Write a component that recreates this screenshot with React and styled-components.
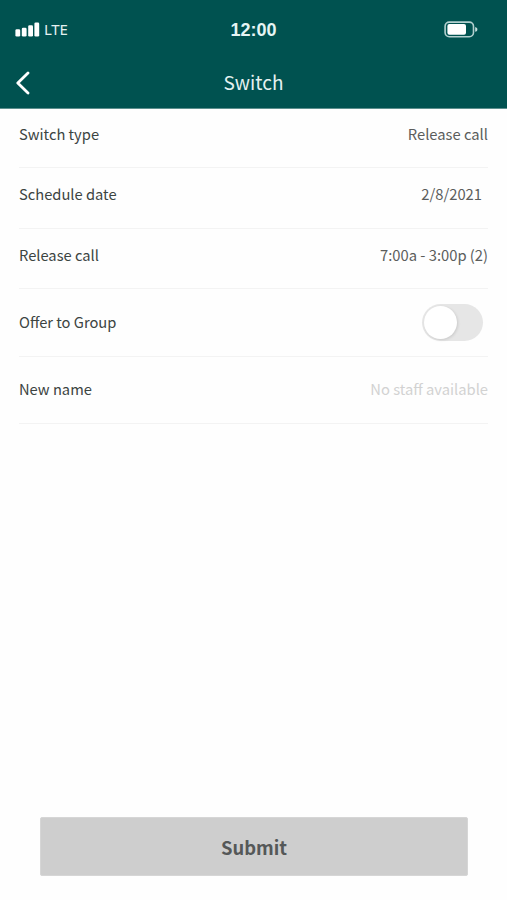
import React from "react";
import styled, { createGlobalStyle } from "styled-components";

const GlobalStyle = createGlobalStyle`
  * { box-sizing: border-box; }
  body { margin: 0; background: #fefefe; }
`;

const Screen = styled.main`
  display: flex;
  flex-direction: column;
  width: 507px;
  height: 900px;
  overflow: hidden;
  background: #fefefe;
  font-family: "Noto Sans CJK SC", "Noto Sans", sans-serif;
`;

const Header = styled.header`
  flex: none;
  height: 109px;
  background: #005250;
  border-bottom: 1px solid #5c8f8e;
  color: #e4f1f0;
`;

const StatusBar = styled.div`
  display: grid;
  grid-template-columns: 1fr auto 1fr;
  align-items: center;
  height: 60px;
  padding: 0 29px 0 15px;
`;

const Carrier = styled.div`
  display: flex;
  align-items: center;
  gap: 4px;
  height: 20px;
  margin-top: -1px;
  font: 400 15px/20px "Noto Sans", sans-serif;
  letter-spacing: -0.2px;
`;

const CarrierName = styled.span`
  padding-bottom: 1px;
`;

const Clock = styled.time`
  margin-left: 14px;
  font: 700 18px/20px "Liberation Sans", Arial, sans-serif;
  color: #e6f5f4;
`;

const Battery = styled.svg`
  justify-self: end;
  margin-top: -1px;
`;

const TitleBar = styled.div`
  display: grid;
  grid-template-columns: 60px 1fr 60px;
  align-items: center;
  height: 45px;
`;

const BackButton = styled.button`
  display: flex;
  width: 46px;
  padding: 0 0 0 15px;
  border: 0;
  background: none;
`;

const Title = styled.h1`
  margin: 0 0 1px;
  text-align: center;
  font-size: 19px;
  font-weight: 400;
  line-height: 28px;
`;

const Form = styled.section`
  flex: 1;
  padding: 0 19px;
`;

const Row = styled.div`
  display: flex;
  justify-content: space-between;
  align-items: center;
  height: ${(p) => p.$height}px;
  padding-bottom: ${(p) => p.$lift || 0}px;
  border-bottom: 1px solid #f3f3f3;
`;

const Label = styled.span`
  font-size: 14.7px;
  line-height: 22px;
  color: #3c4442;
`;

const Value = styled.span`
  margin-right: ${(p) => p.$inset || 0}px;
  font-size: 14.75px;
  line-height: 22px;
  color: ${(p) => (p.$muted ? "#d2d2d2" : "#5b5d5c")};
`;

const Toggle = styled.button`
  display: flex;
  align-items: center;
  width: 61px;
  height: 37px;
  margin-right: 5px;
  padding: 0 2px;
  border: 0;
  border-radius: 19px;
  background: #e6e6e6;
`;

const Knob = styled.span`
  width: 33px;
  height: 33px;
  border-radius: 50%;
  background: #fff;
  box-shadow: 1px 1px 3px rgba(0, 0, 0, 0.12);
`;

const Footer = styled.footer`
  flex: none;
  padding: 0 39px 24px 40px;
`;

const SubmitButton = styled.button`
  display: block;
  width: 100%;
  height: 59px;
  padding: 1px 0 0;
  border: 1px solid #d6d6d6;
  border-radius: 2px;
  background: #cecece;
  color: #555858;
  font: 700 18.4px/28px "Noto Sans CJK SC", "Noto Sans", sans-serif;
`;

export default function App() {
  return (
    <Screen>
      <GlobalStyle />
      <Header>
        <StatusBar>
          <Carrier>
            <svg width="25" height="15" viewBox="0 0 25 15" fill="#fff" aria-hidden="true">
              <rect x="0.4" y="7.3" width="4.8" height="7.2" rx="1.3" />
              <rect x="6.8" y="5.7" width="4.8" height="8.8" rx="1.3" />
              <rect x="13.2" y="3.2" width="4.8" height="11.3" rx="1.3" />
              <rect x="19.4" y="0.4" width="4.8" height="14.1" rx="1.3" />
            </svg>
            <CarrierName>LTE</CarrierName>
          </Carrier>
          <Clock>12:00</Clock>
          <Battery width="34" height="17" viewBox="0 0 34 17" aria-hidden="true">
            <rect x="1.1" y="1.1" width="28.4" height="14.6" rx="4.2" fill="none" stroke="#b3d0cf" strokeWidth="1.6" />
            <rect x="3.4" y="3" width="18.6" height="10.8" rx="2" fill="#fff" />
            <path d="M31.2 6c1.5.4 2.2 1.3 2.2 2.4s-.7 2-2.2 2.4Z" fill="#c5dddc" />
          </Battery>
        </StatusBar>
        <TitleBar>
          <BackButton aria-label="Back">
            <svg width="16" height="24" viewBox="0 0 16 24" fill="none" stroke="#fff" strokeWidth="2.8" strokeLinecap="round" strokeLinejoin="round">
              <path d="M13 1.9 2.8 12 13 22" />
            </svg>
          </BackButton>
          <Title>Switch</Title>
        </TitleBar>
      </Header>
      <Form>
        <Row $height={59} $lift={8}>
          <Label>Switch type</Label>
          <Value>Release call</Value>
        </Row>
        <Row $height={61} $lift={8}>
          <Label>Schedule date</Label>
          <Value $inset={6}>2/8/2021</Value>
        </Row>
        <Row $height={60} $lift={7}>
          <Label>Release call</Label>
          <Value>7:00a - 3:00p (2)</Value>
        </Row>
        <Row $height={68} $lift={1}>
          <Label>Offer to Group</Label>
          <Toggle role="switch" aria-checked="false" aria-label="Offer to Group">
            <Knob />
          </Toggle>
        </Row>
        <Row $height={67} $lift={2}>
          <Label>New name</Label>
          <Value $muted>No staff available</Value>
        </Row>
      </Form>
      <Footer>
        <SubmitButton>Submit</SubmitButton>
      </Footer>
    </Screen>
  );
}
